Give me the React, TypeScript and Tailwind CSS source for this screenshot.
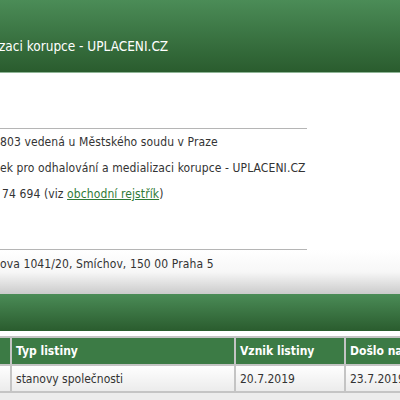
import React from 'react';

const font = { fontFamily: '"DejaVu Sans Condensed", Tahoma, "DejaVu Sans", sans-serif' };

const InfoRow: React.FC<{ children: React.ReactNode }> = ({ children }) => (
  <div className="h-[26px] flex items-center text-[12px] tracking-[0.1px] text-[#333] whitespace-nowrap">{children}</div>
);

const App: React.FC = () => {
  return (
    <div className="w-[400px] h-[400px] overflow-hidden bg-white" style={font}>
      {/* title bar */}
      <div className="h-[73px] bg-gradient-to-b from-[#4b8c57] to-[#2a5c2e] border-b border-[#8fb596] flex items-end pb-[16px]">
        <h1 className="text-[13.5px] text-white whitespace-nowrap -ml-[1px]">zaci korupce - UPLACENI.CZ</h1>
      </div>

      {/* company info */}
      <div className="pt-[55px]">
        <div className="w-[307px] border-t border-[#b5b5b5]" />
        <InfoRow>803 vedená u Městského soudu v Praze</InfoRow>
        <InfoRow>ek pro odhalování a medializaci korupce - UPLACENI.CZ</InfoRow>
        <InfoRow>
          <span className="ml-[2px]">74 694 (viz <a href="#" className="text-[#2f7a37] underline">obchodní rejstřík</a>)</span>
        </InfoRow>
        <div className="h-[42px]" />
        <div className="w-[307px] border-t border-[#b5b5b5]" />
        <div className="h-[44px] bg-gradient-to-b from-white via-[#f7f7f7] to-[#cbcbcb] text-[12px] tracking-[0.1px] text-[#333] whitespace-nowrap pt-[5px]">
          ova 1041/20, Smíchov, 150 00 Praha 5
        </div>
      </div>

      {/* section bar */}
      <div className="h-[37px] bg-gradient-to-b from-[#4b8c57] to-[#2a5c2e]" />

      {/* documents table */}
      <div className="pt-[5px] bg-white">
        <table className="border-collapse text-[12px] whitespace-nowrap w-[460px] table-fixed">
          <colgroup>
            <col className="w-[11px]" />
            <col className="w-[224px]" />
            <col className="w-[110px]" />
            <col className="w-[115px]" />
          </colgroup>
          <thead>
            <tr className="h-[28px] bg-[#3c7b45] text-white font-bold text-left">
              <th className="border-2 border-[#c4c4c4] border-l-0" />
              <th className="border-2 border-[#c4c4c4] px-[4px]">Typ listiny</th>
              <th className="border-2 border-[#c4c4c4] px-[4px]">Vznik listiny</th>
              <th className="border-2 border-[#c4c4c4] px-[4px] text-left">Došlo na</th>
            </tr>
          </thead>
          <tbody>
            <tr className="h-[27px] bg-gradient-to-b from-white to-[#ebebeb] text-[#333]">
              <td className="border-2 border-[#c4c4c4] border-l-0" />
              <td className="border-2 border-[#c4c4c4] px-[4px]">stanovy společnosti</td>
              <td className="border-2 border-[#c4c4c4] px-[4px]">20.7.2019</td>
              <td className="border-2 border-[#c4c4c4] px-[4px]">23.7.2019</td>
            </tr>
          </tbody>
        </table>
        <div className="h-[20px] bg-[#ececec]" />
      </div>
    </div>
  );
};

export default App;
